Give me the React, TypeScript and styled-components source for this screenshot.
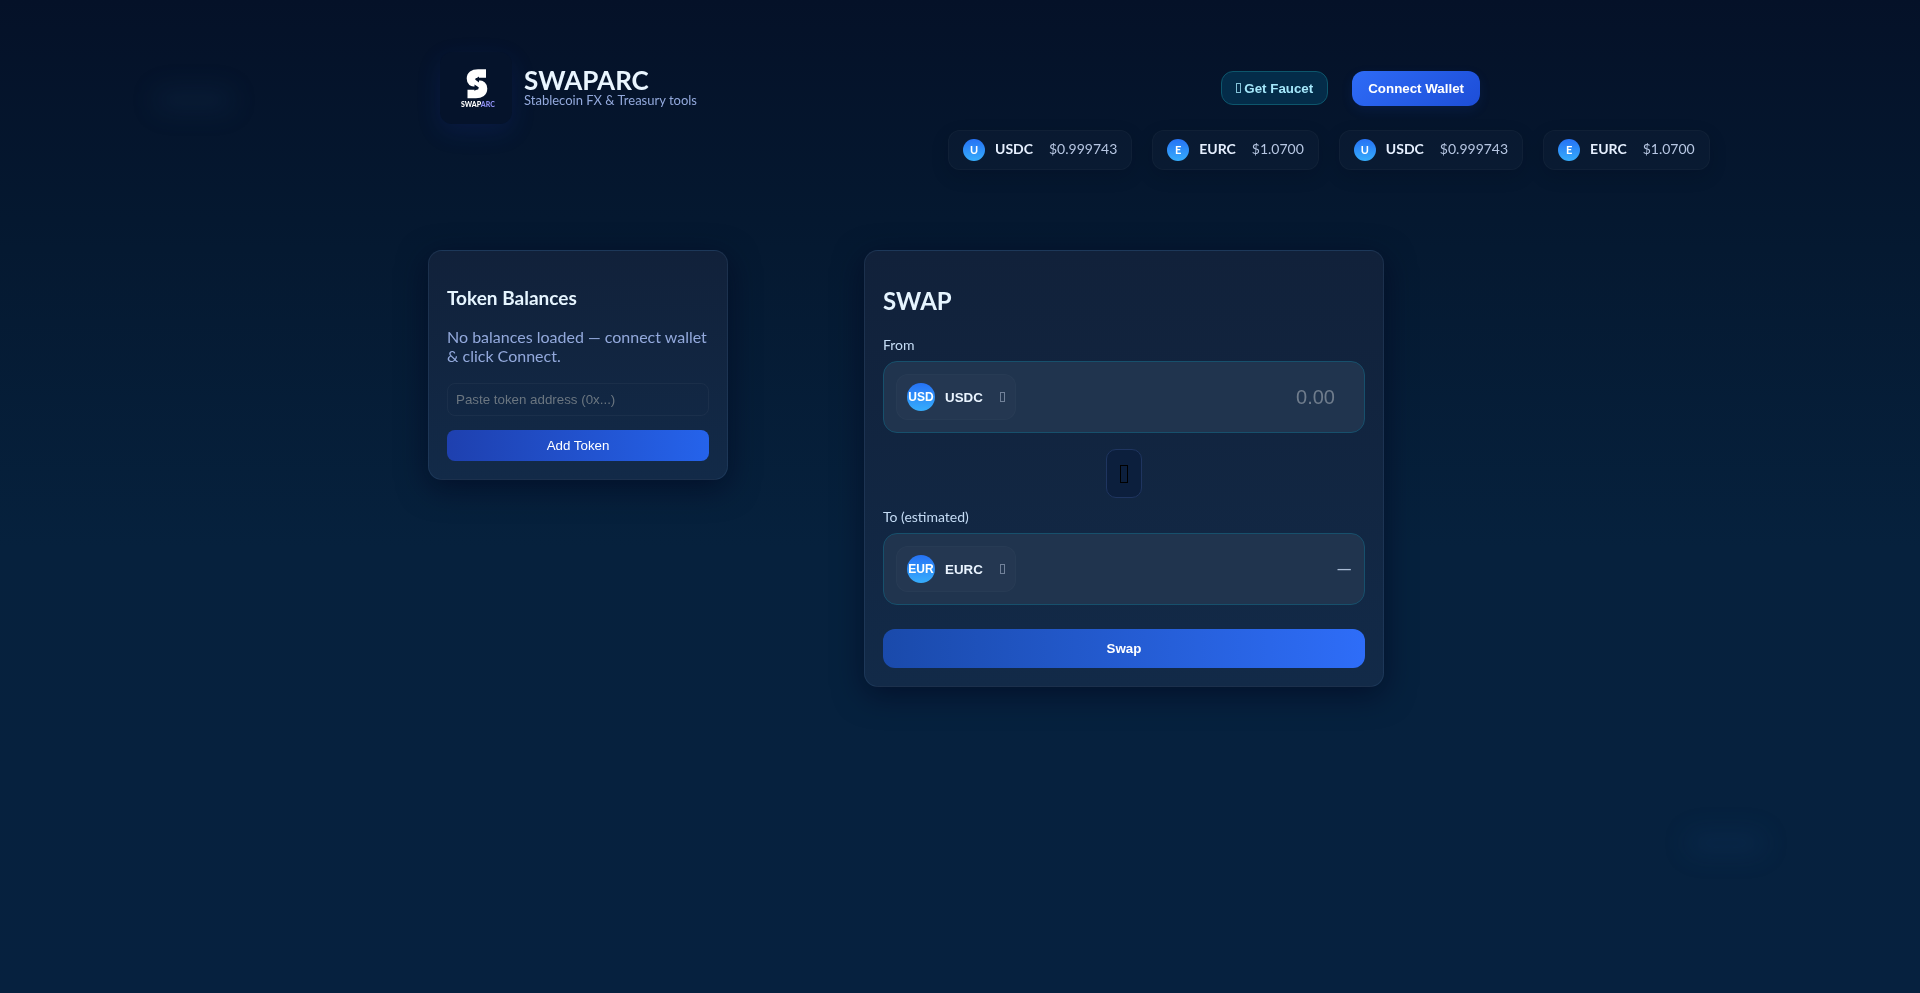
import React, { useState } from "react";
import styled, { createGlobalStyle } from "styled-components";

const GlobalStyle = createGlobalStyle`
  * { box-sizing: border-box; }
  body {
    margin: 0;
    min-height: 100vh;
    background: linear-gradient(180deg, #051128 0%, #051931 25%, #06213d 55%, #06213f 100%);
    color: #e6f0ff;
    font-family: Lato, "Liberation Sans", sans-serif;
    overflow-x: hidden;
  }
  button, input { font-family: "Liberation Sans", Arial, sans-serif; }
`;

const Glow = styled.div<{ $corner: "top" | "bottom" }>`
  position: fixed;
  z-index: -1;
  width: 80px;
  height: 24px;
  border-radius: 12px;
  filter: blur(12px);
  ${({ $corner }) =>
    $corner === "top"
      ? "top: 88px; left: 8%; background: rgba(30, 70, 110, 0.14);"
      : "bottom: 138px; right: 8%; background: rgba(20, 70, 130, 0.14);"}
`;

const Page = styled.div`
  max-width: 1100px;
  margin: 0 auto;
  padding: 40px 18px;
`;

const Header = styled.header`
  display: flex;
  align-items: center;
  justify-content: space-between;
  padding: 12px 12px 6px;
`;

const Brand = styled.div`
  display: flex;
  align-items: center;
  gap: 12px;
`;

const BrandText = styled.div`
  padding-bottom: 2px;
`;

const Logo = styled.svg`
  width: 72px;
  height: 72px;
  border-radius: 12px;
  background: #05132b;
  box-shadow: 0 8px 24px rgba(30, 58, 180, 0.16);
`;

const BrandName = styled.h1`
  margin: 0;
  font-size: 26px;
  line-height: 26px;
  font-weight: 700;
  color: #eaf6ff;
`;

const Tagline = styled.div`
  font-size: 13px;
  line-height: 14px;
  color: #93a9dc;
`;

const Actions = styled.div`
  display: flex;
  align-items: center;
  gap: 24px;
`;

const FaucetButton = styled.button`
  height: 34px;
  padding: 0 14px;
  border: 1px solid #0d566c;
  border-radius: 12px;
  background: #042c49;
  color: #a5e8fb;
  font-weight: 700;
`;

const ConnectButton = styled.button`
  height: 35px;
  padding: 0 16px;
  border: 0;
  border-radius: 12px;
  background: linear-gradient(135deg, #2e6bf6, #1d4ed8);
  box-shadow: 0 4px 12px rgba(29, 78, 216, 0.12);
  color: #fff;
  font-weight: 700;
`;

const Ticker = styled.div`
  display: flex;
  gap: 20px;
  margin-left: 520px;
  white-space: nowrap;
`;

const TickerItem = styled.div`
  display: flex;
  flex: none;
  align-items: center;
  height: 40px;
  padding: 0 14px;
  border: 1px solid rgba(255, 255, 255, 0.03);
  border-radius: 12px;
  background: rgba(255, 255, 255, 0.02);
  box-shadow: 0 6px 18px rgba(2, 6, 23, 0.15);
  font-size: 14px;
  line-height: 16px;
`;

const Coin = styled.span<{ $size: number }>`
  display: flex;
  flex: none;
  align-items: center;
  justify-content: center;
  width: ${({ $size }) => $size}px;
  height: ${({ $size }) => $size}px;
  border-radius: 50%;
  background: linear-gradient(180deg, #2672f5, #36adfc);
  color: #fff;
  font-size: ${({ $size }) => ($size > 24 ? 12 : 11)}px;
  font-weight: 700;
`;

const TickerSymbol = styled.strong`
  margin: 0 16px 0 10px;
  padding-bottom: 2px;
`;

const TickerPrice = styled.span`
  padding-bottom: 2px;
  color: #b6c6e2;
`;

const Columns = styled.main`
  display: grid;
  grid-template-columns: 300px 1fr;
  align-items: start;
  gap: 28px;
  margin-top: 80px;
`;

const Card = styled.section`
  padding: 18px;
  border: 1px solid rgba(120, 170, 230, 0.11);
  border-radius: 14px;
  background: linear-gradient(180deg, #11213a, #122a48);
  box-shadow: 0 8px 30px rgba(0, 6, 30, 0.55);
`;

const SwapCard = styled(Card)`
  width: 100%;
  max-width: 520px;
  justify-self: center;
`;

const CardTitle = styled.h3`
  margin: 18px 0;
  font-size: 19px;
  line-height: 22px;
  color: #e6f5ff;
`;

const SwapTitle = styled.h2`
  margin: 17px 0 21px;
  font-size: 24px;
  line-height: 29px;
  color: #e6f5ff;
`;

const EmptyNote = styled.p`
  margin: 0 0 18px;
  font-size: 16px;
  line-height: 19px;
  color: #93a9dc;
`;

const AddressInput = styled.input`
  display: block;
  width: 100%;
  height: 33px;
  margin-bottom: 14px;
  padding: 0 8px;
  border: 1px solid rgba(255, 255, 255, 0.04);
  border-radius: 8px;
  background: transparent;
  color: #e6f0ff;
  &::placeholder { color: #6b7680; }
`;

const AddButton = styled.button`
  display: block;
  width: 100%;
  height: 31px;
  border: 0;
  border-radius: 8px;
  background: linear-gradient(90deg, #1e40af, #2563eb);
  color: #fff;
`;

const FieldLabel = styled.label`
  display: block;
  margin-bottom: 8px;
  font-size: 14px;
  line-height: 17px;
  color: #c5dcf5;
`;

const TokenField = styled.div`
  display: flex;
  align-items: center;
  justify-content: space-between;
  padding: 12px;
  border: 1px solid #17506c;
  border-radius: 14px;
  background: #20344e;
`;

const TokenButton = styled.button`
  display: flex;
  align-items: center;
  flex: none;
  gap: 10px;
  height: 46px;
  padding: 0 10px;
  border: 1px solid rgba(255, 255, 255, 0.02);
  border-radius: 12px;
  background: rgba(255, 255, 255, 0.02);
  color: #eaf4ff;
  font-weight: 700;
`;

const BoxGlyph = styled.span<{ $large?: boolean }>`
  display: inline-block;
  width: ${({ $large }) => ($large ? 8 : 5)}px;
  height: ${({ $large }) => ($large ? 18 : 10)}px;
  border: 1px solid currentColor;
  opacity: ${({ $large }) => ($large ? 1 : 0.8)};
`;

const Caret = styled.span`
  display: flex;
  margin-left: 7px;
  color: #8494ab;
`;

const AmountInput = styled.input`
  width: 160px;
  padding: 0 17px;
  border: 0;
  outline: 0;
  background: transparent;
  color: #e6f0ff;
  font-size: 20px;
  text-align: right;
  &::placeholder { color: #6f7c8c; }
`;

const Estimate = styled.output`
  padding-bottom: 4px;
  font-size: 20px;
  color: #a9bbd4;
`;

const FlipRow = styled.div`
  display: flex;
  justify-content: center;
  margin: 16px 0 10px;
`;

const FlipButton = styled.button`
  display: flex;
  align-items: center;
  height: 49px;
  padding: 0 13px;
  border: 1px solid #1f3560;
  border-radius: 10px;
  background: #0c1f3d;
  color: #000;
`;

const SwapButton = styled.button`
  display: block;
  width: 100%;
  height: 39px;
  margin-top: 24px;
  border: 0;
  border-radius: 12px;
  background: linear-gradient(90deg, #1a4aab, #2e6df8);
  color: #fff;
  font-weight: 700;
`;

const prices = [
  { symbol: "USDC", price: "$0.999743" },
  { symbol: "EURC", price: "$1.0700" },
];

function TokenPicker({ symbol }: { symbol: string }) {
  return (
    <TokenButton type="button">
      <Coin $size={28}>{symbol.slice(0, 3)}</Coin>
      {symbol}
      <Caret><BoxGlyph /></Caret>
    </TokenButton>
  );
}

export default function App() {
  const [address, setAddress] = useState("");
  const [amount, setAmount] = useState("");

  return (
    <>
      <GlobalStyle />
      <Glow $corner="top" />
      <Glow $corner="bottom" />
      <Page>
        <Header>
          <Brand>
            <Logo viewBox="0 0 72 72" role="img" aria-label="Swaparc logo">
              {/* two interlocking exchange arrows */}
              <path
                d="M46 21.5 H38 C33 21.5 31 23.5 31 26.5 C31 30 34 31 37 31.5 C41 32.2 43 33.5 43 36.5 C43 40.5 40 42 36 42 H27.5"
                fill="none"
                stroke="#fff"
                strokeWidth="8.6"
              />
              <path d="M48 26.5 H39 V24.5 L35 27.5 L39 30.5 V28.5 H42 Z" fill="#05132b" />
              <path d="M25 37 H34.5 V39 L39 35.5 L34.5 32.5 V34.5 H31 Z" fill="#05132b" />
              <text x="21" y="55" fontFamily="Lato" fontWeight="900" fontSize="7">
                <tspan fill="#fff">SWAP</tspan>
                <tspan fill="#8d8ef0">ARC</tspan>
              </text>
            </Logo>
            <BrandText>
              <BrandName>SWAPARC</BrandName>
              <Tagline>Stablecoin FX &amp; Treasury tools</Tagline>
            </BrandText>
          </Brand>
          <Actions>
            <FaucetButton type="button"><BoxGlyph /> Get Faucet</FaucetButton>
            <ConnectButton type="button">Connect Wallet</ConnectButton>
          </Actions>
        </Header>

        <Ticker>
          {[...prices, ...prices].map(({ symbol, price }, i) => (
            <TickerItem key={i}>
              <Coin $size={22}>{symbol[0]}</Coin>
              <TickerSymbol>{symbol}</TickerSymbol>
              <TickerPrice>{price}</TickerPrice>
            </TickerItem>
          ))}
        </Ticker>

        <Columns>
          <Card>
            <CardTitle>Token Balances</CardTitle>
            <EmptyNote>No balances loaded — connect wallet &amp; click Connect.</EmptyNote>
            <AddressInput
              aria-label="Token address"
              placeholder="Paste token address (0x...)"
              value={address}
              onChange={(e) => setAddress(e.target.value)}
            />
            <AddButton type="button">Add Token</AddButton>
          </Card>

          <SwapCard>
            <SwapTitle>SWAP</SwapTitle>
            <FieldLabel htmlFor="from-amount">From</FieldLabel>
            <TokenField>
              <TokenPicker symbol="USDC" />
              <AmountInput
                id="from-amount"
                inputMode="decimal"
                placeholder="0.00"
                value={amount}
                onChange={(e) => setAmount(e.target.value)}
              />
            </TokenField>
            <FlipRow>
              <FlipButton type="button" aria-label="Switch tokens"><BoxGlyph $large /></FlipButton>
            </FlipRow>
            <FieldLabel htmlFor="to-amount">To (estimated)</FieldLabel>
            <TokenField>
              <TokenPicker symbol="EURC" />
              <Estimate id="to-amount">—</Estimate>
            </TokenField>
            <SwapButton type="button">Swap</SwapButton>
          </SwapCard>
        </Columns>
      </Page>
    </>
  );
}
